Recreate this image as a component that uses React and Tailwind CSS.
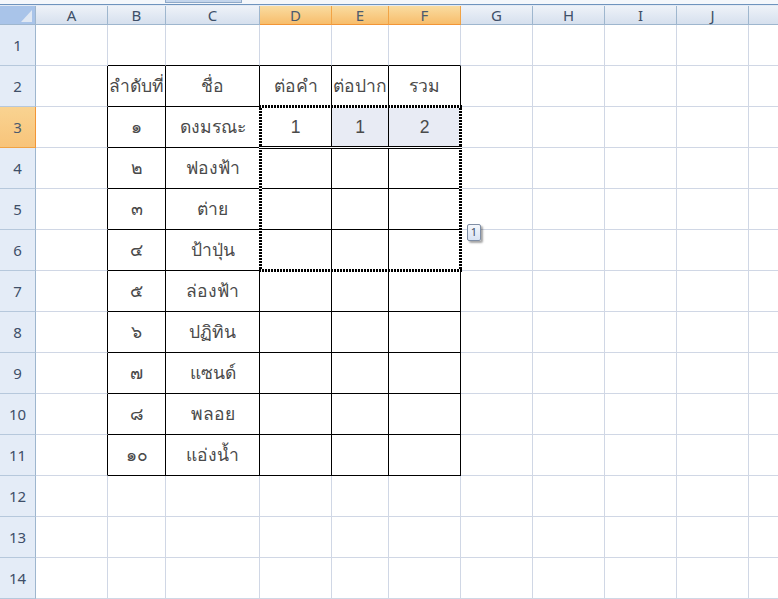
const colWidths = [
  ["A", 72], ["B", 58], ["C", 94], ["D", 72], ["E", 57], ["F", 72],
  ["G", 72], ["H", 72], ["I", 72], ["J", 72], ["", 72],
];
const rowNums = [1, 2, 3, 4, 5, 6, 7, 8, 9, 10, 11, 12, 13, 14];
const selectedCols = ["D", "E", "F"];

const table = {
  2: { B: "ลำดับที่", C: "ชื่อ", D: "ต่อคำ", E: "ต่อปาก", F: "รวม" },
  3: { B: "๑", C: "ดงมรณะ", D: "1", E: "1", F: "2" },
  4: { B: "๒", C: "ฟองฟ้า" },
  5: { B: "๓", C: "ต่าย" },
  6: { B: "๔", C: "ป้าปุ่น" },
  7: { B: "๕", C: "ล่องฟ้า" },
  8: { B: "๖", C: "ปฏิทิน" },
  9: { B: "๗", C: "แซนด์" },
  10: { B: "๘", C: "พลอย" },
  11: { B: "๑๐", C: "แอ่งน้ำ" },
};

const inTable = (c, r) => r >= 2 && r <= 11 && c && "BCDEF".includes(c);

function Cell({ col, row }) {
  const right = inTable(col, row) || (col === "A" && row >= 2 && row <= 11);
  const bottom = inTable(col, row) || (row === 1 && col && "BCDEF".includes(col));
  const tinted = row === 3 && (col === "E" || col === "F");
  return (
    <div
      className={`flex items-center justify-center overflow-hidden whitespace-nowrap border-r border-b font-['Liberation_Sans','Noto_Sans',sans-serif] text-[17.5px] font-light text-[#4a4a4a] ${
        right ? "border-r-black" : "border-r-[#d0d7e5]"
      } ${bottom ? "border-b-black" : "border-b-[#d0d7e5]"} ${tinted ? "bg-[#e8ebf4]" : "bg-white"}`}
    >
      {table[row]?.[col]}
    </div>
  );
}

function HAnts() {
  return <div className="h-[3px] bg-[repeating-linear-gradient(90deg,#000_0_2px,#fff_2px_3px)]" />;
}

function VAnts({ h }) {
  return (
    <div className={`flex justify-between ${h}`}>
      <div className="w-[3px] bg-[repeating-linear-gradient(0deg,#000_0_2px,#fff_2px_3px)]" />
      <div className="w-[3px] bg-[repeating-linear-gradient(0deg,#000_0_2px,#fff_2px_3px)]" />
    </div>
  );
}

export default function App() {
  return (
    <div className="relative h-[599px] w-[778px] overflow-hidden bg-white font-['Noto_Sans',sans-serif]">
      {/* sheet tabs strip cut off at the top */}
      <div className="flex h-[4px] bg-[#f4f7fb] pl-[165px]">
        <div className="h-[3px] w-[77px] border-x border-b border-[#8fa9c8] bg-[#c3d5ec]" />
      </div>
      <div className="h-[2px] border-b border-b-[#e3eaf4] bg-[#6e93bd]" />

      <div
        className="grid"
        style={{
          gridTemplateColumns: `36px ${colWidths.map((c) => c[1] + "px").join(" ")}`,
          gridTemplateRows: `19px repeat(14, 41px)`,
        }}
      >
        <div className="relative border-r border-b border-[#9eb6ce] bg-[#a9c4e9]">
          <svg className="absolute right-[3px] bottom-[2px]" width="11" height="12">
            <path d="M11 0V12H0Z" fill="#e0e8f3" />
          </svg>
        </div>
        {colWidths.map(([c]) => (
          <div
            key={c}
            className={`flex items-center justify-center border-r border-b text-[15px] ${
              selectedCols.includes(c)
                ? "border-r-[#f1a345] border-b-[#f29536] bg-gradient-to-b from-[#f9dca0] to-[#f7bd6b] text-[#4c5a6e]"
                : "border-r-[#9eb6ce] border-b-[#9eb6ce] bg-gradient-to-b from-[#eef2f8] to-[#d6e0ee] text-[#3e4f68]"
            }`}
          >
            {c}
          </div>
        ))}

        {rowNums.map((r) => (
          <div key={r} className="contents">
            <div
              className={`flex items-center justify-center border-r border-b text-[15px] ${
                r === 3
                  ? "border-r-[#f29536] border-b-[#f1a345] bg-gradient-to-b from-[#f9d391] to-[#f8c47a] text-[#4c5a6e]"
                  : "border-r-[#9eb6ce] border-b-[#b6c8dc] bg-[#e4ecf7] text-[#3e4f68]"
              }`}
            >
              {r}
            </div>
            {colWidths.map(([c]) => (
              <Cell key={c} col={c} row={r} />
            ))}
          </div>
        ))}
      </div>

      {/* copy marquee over D3:F6 */}
      <div className="absolute top-[105px] left-[259px] w-[203px]">
        <HAnts />
        <VAnts h="h-[38px]" />
        <div className="h-[3px] border-y border-black bg-white" />
        <VAnts h="h-[120px]" />
        <HAnts />
      </div>

      {/* paste options tag */}
      <div className="absolute top-[224px] left-[467px] flex h-[17px] w-[14px] items-center justify-center rounded-[2px] border border-[#7f8ea5] bg-gradient-to-b from-[#f4f7fc] to-[#d9e3f3] text-[11px] text-[#3e4f68] shadow-[2px_2px_2px_rgba(0,0,0,0.35)]">
        1
      </div>
    </div>
  );
}
